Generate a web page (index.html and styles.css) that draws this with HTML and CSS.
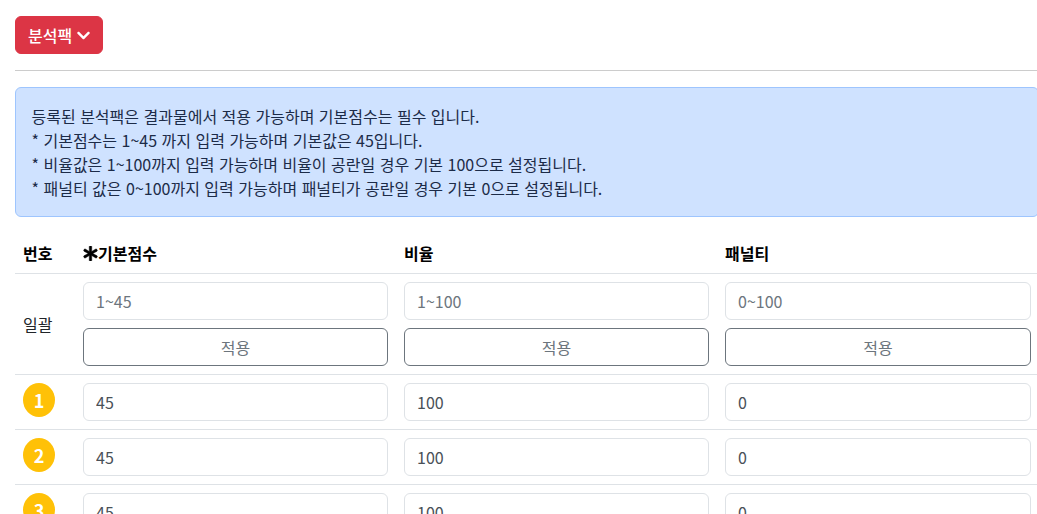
FILE: index.html
```html
<!DOCTYPE html>
<html lang="ko">
<head>
    <meta charset="UTF-8">
    <title>분석팩</title>
    <link rel="stylesheet" href="styles.css">
</head>
<body>
    <button class="btn-pack">
        분석팩
        <svg class="icon-chevron" viewBox="0 0 448 512"><path d="M207.029 381.476L12.686 187.132c-9.373-9.373-9.373-24.569 0-33.941l22.667-22.667c9.357-9.357 24.522-9.375 33.901-.04L224 284.505l154.745-154.021c9.379-9.335 24.544-9.317 33.901.04l22.667 22.667c9.373 9.373 9.373 24.569 0 33.941L240.971 381.476c-9.373 9.372-24.569 9.372-33.942 0z"/></svg>
    </button>

    <hr class="divider">

    <div class="alert">
        등록된 분석팩은 결과물에서 적용 가능하며 기본점수는 필수 입니다.<br>
        * 기본점수는 1~45 까지 입력 가능하며 기본값은 45입니다.<br>
        * 비율값은 1~100까지 입력 가능하며 비율이 공란일 경우 기본 100으로 설정됩니다.<br>
        * 패널티 값은 0~100까지 입력 가능하며 패널티가 공란일 경우 기본 0으로 설정됩니다.
    </div>

    <table class="pack-table">
        <colgroup>
            <col class="col-num">
            <col class="col-field">
            <col class="col-field">
            <col class="col-last">
        </colgroup>
        <thead>
            <tr>
                <th>번호</th>
                <th><svg class="icon-asterisk" viewBox="0 0 512 512"><path d="M478.21 334.093L336 256l142.21-78.093c11.795-6.477 15.961-21.384 9.232-33.037l-19.48-33.741c-6.728-11.653-21.72-15.499-33.227-8.523L296 186.718l3.475-162.204C299.763 11.061 288.937 0 275.48 0h-38.96c-13.456 0-24.283 11.061-23.994 24.514L216 186.718 77.265 102.607c-11.506-6.976-26.499-3.13-33.227 8.523l-19.48 33.741c-6.728 11.653-2.562 26.56 9.233 33.037L176 256 33.79 334.093c-11.795 6.477-15.961 21.384-9.232 33.037l19.48 33.741c6.728 11.653 21.721 15.499 33.227 8.523L216 325.282l-3.475 162.204C212.237 500.939 223.064 512 236.52 512h38.961c13.456 0 24.283-11.061 23.995-24.514L296 325.282l138.735 84.111c11.506 6.976 26.499 3.13 33.227-8.523l19.48-33.741c6.728-11.653 2.563-26.559-9.232-33.036z"/></svg>기본점수</th>
                <th>비율</th>
                <th>패널티</th>
            </tr>
        </thead>
        <tbody>
            <tr>
                <td>일괄</td>
                <td>
                    <input class="field field-bulk" placeholder="1~45">
                    <button class="btn-apply">적용</button>
                </td>
                <td>
                    <input class="field field-bulk" placeholder="1~100">
                    <button class="btn-apply">적용</button>
                </td>
                <td>
                    <input class="field field-bulk" placeholder="0~100">
                    <button class="btn-apply">적용</button>
                </td>
            </tr>
            <tr>
                <td><span class="num-badge">1</span></td>
                <td><input class="field" value="45"></td>
                <td><input class="field" value="100"></td>
                <td><input class="field" value="0"></td>
            </tr>
            <tr>
                <td><span class="num-badge">2</span></td>
                <td><input class="field" value="45"></td>
                <td><input class="field" value="100"></td>
                <td><input class="field" value="0"></td>
            </tr>
            <tr>
                <td><span class="num-badge">3</span></td>
                <td><input class="field" value="45"></td>
                <td><input class="field" value="100"></td>
                <td><input class="field" value="0"></td>
            </tr>
        </tbody>
    </table>
</body>
</html>
```

FILE: styles.css
```css
html {
    height: 514px;
    overflow: hidden;
}

body {
    width: 1039px;
    margin: 0;
    padding: 16px 0 0 15px;
    box-sizing: border-box;
    font-family: "Noto Sans CJK KR", "Noto Sans", sans-serif;
    font-size: 16px;
    line-height: 1.5;
    color: #212529;
    background: #fff;
}

.btn-pack {
    display: flex;
    align-items: center;
    gap: 5px;
    height: 38px;
    padding: 0 12px;
    border: 1px solid #dc3545;
    border-radius: 6px;
    background: #dc3545;
    color: #fff;
    font: inherit;
    font-weight: 500;
}

.icon-chevron {
    width: 13px;
    height: 15px;
    fill: #fff;
}

.divider {
    height: 1px;
    margin: 16px 0;
    border: 0;
    background: #ccc;
}

.alert {
    padding: 16px 16px 16px 15.5px;
    border: 1px solid #9ec5fe;
    border-radius: 6px;
    background: #cfe2ff;
    color: #1c2b48;
}

.pack-table {
    width: 1024px;
    margin-top: 16px;
    border-collapse: collapse;
    table-layout: fixed;
}

.col-num {
    width: 60px;
}

.col-field {
    width: 321px;
}

.col-last {
    width: 322px;
}

.pack-table th,
.pack-table td {
    padding: 8px;
    border-bottom: 1px solid #dee2e6;
    color: #212529;
    text-align: left;
    vertical-align: middle;
}

.pack-table th {
    font-weight: 700;
    color: #000;
}

.icon-asterisk {
    width: 15px;
    height: 15px;
    vertical-align: -1px;
    stroke: #000;
    stroke-width: 16;
}

.field {
    display: block;
    width: 100%;
    height: 38px;
    box-sizing: border-box;
    padding: 6px 12px;
    border: 1px solid #dee2e6;
    border-radius: 6px;
    background: #fff;
    color: #495057;
    font: inherit;
}

.field::placeholder {
    color: #6c757d;
}

.field-bulk {
    margin-bottom: 8px;
}

.btn-apply {
    display: block;
    width: 100%;
    height: 38px;
    border: 1px solid #6c757d;
    border-radius: 6px;
    background: #fff;
    color: #6c757d;
    font: inherit;
}

.num-badge {
    display: flex;
    align-items: center;
    justify-content: center;
    width: 32px;
    height: 34px;
    margin-bottom: 4px;
    border-radius: 50%;
    background: #ffc107;
    color: #fff;
    font-size: 18px;
    font-weight: 700;
}
```
